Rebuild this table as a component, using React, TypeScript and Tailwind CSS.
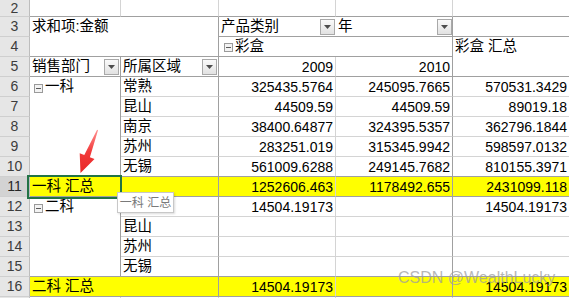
// full class names only, picked by index
const ROW = [
  '',
  'row-start-1',
  'row-start-2',
  'row-start-3',
  'row-start-4',
  'row-start-5',
  'row-start-6',
  'row-start-7',
  'row-start-8',
  'row-start-9',
  'row-start-10',
  'row-start-11',
  'row-start-12',
  'row-start-13',
  'row-start-14',
  'row-start-15',
  'row-start-16',
];

const rL = 'border-r border-r-[#d4d4d4]';
const rD = 'border-r border-r-[#a0a0a0]';
const bL = 'border-b border-b-[#d4d4d4]';
const bD = 'border-b border-b-[#a0a0a0]';
const txt = 'flex items-center pl-[2px] text-[14.5px] text-black';
const num = 'flex items-center justify-end pr-[2px] pt-px text-[14px] text-black';
const yel = 'bg-[#ffff00]';

function DropDown() {
  return (
    <span className="flex h-[16px] w-[15px] items-center justify-center border border-[#a9a9a9] bg-linear-to-b from-[#fafafa] to-[#e2e2e2]">
      <svg width="7" height="4" viewBox="0 0 7 4">
        <polygon points="0,0 7,0 3.5,4" fill="#4d4d4d" />
      </svg>
    </span>
  );
}

function Collapse() {
  return (
    <span className="mt-[2px] mr-[2px] flex h-[9px] w-[9px] items-center justify-center border border-[#9a9a9a] bg-[#f3f3f3]">
      <span className="h-px w-[5px] bg-[#5a5a5a]" />
    </span>
  );
}

function RowHead({ n, row, active }: { n?: number; row: number; active?: boolean }) {
  return (
    <div
      className={`col-start-1 ${ROW[row]} flex items-center justify-center border-r border-b border-r-[#bdbdbd] border-b-[#cfcfcf] text-[14px] ${
        active ? 'bg-[#d3d3d3] text-[#262626]' : 'bg-[#e6e6e6] text-[#3c3c3c]'
      }`}
    >
      {n}
    </div>
  );
}

interface Line {
  b: string;
  c: string;
  d: string;
  e: string;
}

function DataRow({ row, line, last }: { row: number; line: Line; last?: boolean }) {
  const bb = last ? bD : bL;
  return (
    <>
      <div className={`col-start-3 ${ROW[row]} ${rD} ${bb} ${txt}`}>{line.b}</div>
      <div className={`col-start-4 ${ROW[row]} ${rL} ${bb} ${num}`}>{line.c}</div>
      <div className={`col-start-5 ${ROW[row]} ${rD} ${bb} ${num}`}>{line.d}</div>
      <div className={`col-start-6 ${ROW[row]} ${rL} ${bb} ${num}`}>{line.e}</div>
    </>
  );
}

const group1: Line[] = [
  { b: '常熟', c: '325435.5764', d: '245095.7665', e: '570531.3429' },
  { b: '昆山', c: '44509.59', d: '44509.59', e: '89019.18' },
  { b: '南京', c: '38400.64877', d: '324395.5357', e: '362796.1844' },
  { b: '苏州', c: '283251.019', d: '315345.9942', e: '598597.0132' },
  { b: '无锡', c: '561009.6288', d: '249145.7682', e: '810155.3971' },
];

const group2: Line[] = [
  { b: '', c: '14504.19173', d: '', e: '14504.19173' },
  { b: '昆山', c: '', d: '', e: '' },
  { b: '苏州', c: '', d: '', e: '' },
  { b: '无锡', c: '', d: '', e: '' },
];

export default function App() {
  return (
    <div className="relative h-[298px] w-[569px] overflow-hidden bg-white font-['Liberation_Sans','Noto_Sans_CJK_SC',sans-serif]">
      <div className="grid grid-cols-[30px_91px_98px_117px_117px_117px] grid-rows-[17px_repeat(15,20px)] bg-white">
        {/* row headers, 2..16; row 17 only peeks in at the bottom */}
        {Array.from({ length: 15 }, (_, i) => (
          <RowHead key={i} n={i + 2} row={i + 1} active={i + 2 === 11} />
        ))}
        <RowHead row={16} />

        {/* row 2 */}
        <div className={`col-start-2 row-start-1 ${rL} ${bD}`} />
        <div className={`col-start-3 row-start-1 ${rL} ${bD}`} />
        <div className={`col-start-4 row-start-1 ${rL} ${bD}`} />
        <div className={`col-start-5 row-start-1 ${rL} ${bD}`} />
        <div className={`col-start-6 row-start-1 ${rL} ${bD}`} />

        {/* rows 3-4 */}
        <div className={`col-start-2 col-span-2 row-start-2 row-span-2 ${rD} ${bD}`}>
          <div className={`h-[20px] ${txt}`}>求和项:金额</div>
        </div>
        <div className={`col-start-4 row-start-2 ${bD} ${txt} justify-between pr-[1px]`}>
          <span>产品类别</span>
          <DropDown />
        </div>
        <div className={`col-start-5 row-start-2 ${rD} ${bD} ${txt} justify-between`}>
          <span>年</span>
          <DropDown />
        </div>
        <div className={`col-start-6 row-start-2 ${rL} ${bD}`} />
        <div className={`col-start-4 col-span-2 row-start-3 ${rD} ${bD} ${txt} pl-[5px]`}>
          <Collapse />
          <span>彩盒</span>
        </div>
        <div className={`col-start-6 row-start-3 row-span-2 ${rL} ${bD}`}>
          <div className={`h-[20px] ${txt}`}>彩盒 汇总</div>
        </div>

        {/* row 5 */}
        <div className={`col-start-2 row-start-4 ${rD} ${bD} ${txt} justify-between pr-[1px]`}>
          <span>销售部门</span>
          <DropDown />
        </div>
        <div className={`col-start-3 row-start-4 ${rD} ${bD} ${txt} justify-between pr-[1px]`}>
          <span>所属区域</span>
          <DropDown />
        </div>
        <div className={`col-start-4 row-start-4 ${rL} ${bD} ${num}`}>2009</div>
        <div className={`col-start-5 row-start-4 ${rD} ${bD} ${num}`}>2010</div>

        {/* 一科 */}
        <div className={`col-start-2 row-start-5 row-span-5 ${rD} ${bD}`}>
          <div className={`h-[20px] ${txt} pl-[4px]`}>
            <Collapse />
            <span>一科</span>
          </div>
        </div>
        {group1.map((line, i) => (
          <DataRow key={i} row={i + 5} line={line} last={i === group1.length - 1} />
        ))}

        {/* row 11 subtotal */}
        <div className={`col-start-2 row-start-10 ${rD} ${bD} ${yel} ${txt}`}>一科 汇总</div>
        <div className={`col-start-3 row-start-10 ${rD} ${bD} ${yel}`} />
        <div className={`col-start-4 row-start-10 ${rL} ${bD} ${yel} ${num}`}>1252606.463</div>
        <div className={`col-start-5 row-start-10 ${rD} ${bD} ${yel} ${num}`}>1178492.655</div>
        <div className={`col-start-6 row-start-10 ${rL} ${bD} ${yel} ${num}`}>2431099.118</div>

        {/* 二科 */}
        <div className={`col-start-2 row-start-11 row-span-4 ${rD} ${bD}`}>
          <div className={`h-[20px] ${txt} pl-[4px]`}>
            <Collapse />
            <span>二科</span>
          </div>
        </div>
        {group2.map((line, i) => (
          <DataRow key={i} row={i + 11} line={line} last={i === group2.length - 1} />
        ))}

        {/* row 16 subtotal */}
        <div className={`col-start-2 col-span-2 row-start-15 ${rD} ${bD} ${yel} ${txt}`}>二科 汇总</div>
        <div className={`col-start-4 row-start-15 ${rL} ${bD} ${yel} ${num}`}>14504.19173</div>
        <div className={`col-start-5 row-start-15 ${rD} ${bD} ${yel}`} />
        <div className={`col-start-6 row-start-15 ${rL} ${bD} ${yel} ${num}`}>14504.19173</div>

        {/* row 17 */}
        <div className={`col-start-2 row-start-16 ${rL} ${bL}`} />
        <div className={`col-start-3 row-start-16 ${rL} ${bL}`} />
        <div className={`col-start-4 row-start-16 ${rL} ${bL}`} />
        <div className={`col-start-5 row-start-16 ${rL} ${bL}`} />
        <div className={`col-start-6 row-start-16 ${rL} ${bL}`} />
      </div>

      {/* selected cell */}
      <div className="pointer-events-none absolute top-[175px] left-[27px] h-[24px] w-[95px] border-2 border-[#217346]" />

      {/* hover tip */}
      <div className="absolute top-[192px] left-[117px] flex h-[21px] w-[57px] items-center justify-center border border-[#c8c8c8] bg-white text-[12px] text-[#7a7a7a] shadow-[1px_1px_2px_rgba(0,0,0,0.15)]">
        一科 汇总
      </div>

      {/* red arrow */}
      <svg className="pointer-events-none absolute top-0 left-0" width="569" height="298" viewBox="0 0 569 298">
        <defs>
          <linearGradient id="arrowFill" x1="0" y1="0" x2="0" y2="1">
            <stop offset="0" stopColor="#ff9090" />
            <stop offset="0.5" stopColor="#f23b3b" />
            <stop offset="1" stopColor="#e82525" />
          </linearGradient>
        </defs>
        <polygon
          points="98,130.2 89.9,157.3 94.5,159.1 80.5,173 79.7,153.3 84.3,155.1 97.1,129.8"
          fill="url(#arrowFill)"
        />
      </svg>

      {/* watermark */}
      <div className="pointer-events-none absolute top-[270px] left-[398px] text-[16px] leading-none text-[#9e9e9e]/75">
        CSDN @WealthLucky
      </div>
    </div>
  );
}
